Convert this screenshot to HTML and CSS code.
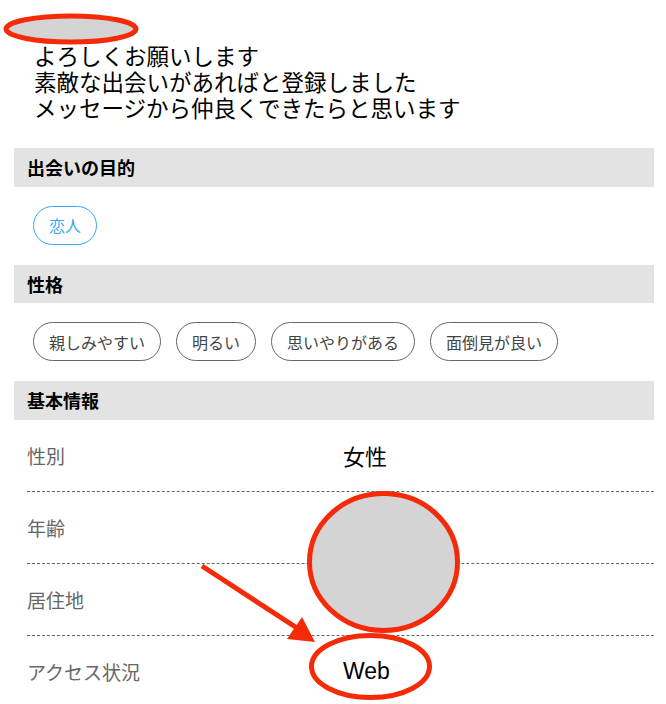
FILE: index.html
```html
<!DOCTYPE html>
<html lang="ja">
<head>
    <meta charset="UTF-8">
    <meta name="viewport" content="width=device-width, initial-scale=1.0">
    <title>プロフィール</title>
    <link rel="stylesheet" href="styles.css">
</head>
<body>
    <div class="profile">
        <!-- 自己紹介 -->
        <p class="intro">
            よろしくお願いします<br>
            素敵な出会いがあればと登録しました<br>
            メッセージから仲良くできたらと思います
        </p>

        <h2 class="section-title">出会いの目的</h2>
        <div class="tags">
            <span class="tag tag-purpose">恋人</span>
        </div>

        <h2 class="section-title">性格</h2>
        <div class="tags">
            <span class="tag">親しみやすい</span>
            <span class="tag">明るい</span>
            <span class="tag">思いやりがある</span>
            <span class="tag">面倒見が良い</span>
        </div>

        <h2 class="section-title">基本情報</h2>
        <dl class="info">
            <div class="info-row">
                <dt>性別</dt>
                <dd>女性</dd>
            </div>
            <div class="info-row">
                <dt>年齢</dt>
                <dd></dd>
            </div>
            <div class="info-row">
                <dt>居住地</dt>
                <dd></dd>
            </div>
            <div class="info-row">
                <dt>アクセス状況</dt>
                <dd class="latin">Web</dd>
            </div>
        </dl>
    </div>

    <!-- 赤丸・矢印の書き込み -->
    <svg class="marks" width="666" height="704" viewBox="0 0 666 704">
        <ellipse cx="71" cy="29" rx="65" ry="13" fill="#d4d4d4" stroke="#f42a08" stroke-width="5"/>
        <ellipse cx="383.5" cy="562" rx="74" ry="68.5" fill="#d4d4d4" stroke="#f42a08" stroke-width="5"/>
        <ellipse cx="370.5" cy="666.5" rx="59" ry="31" fill="none" stroke="#f42a08" stroke-width="5"/>
        <line x1="202" y1="566" x2="300" y2="630" stroke="#f42a08" stroke-width="5"/>
        <polygon points="315,642 302,617 287,639" fill="#f42a08"/>
    </svg>
</body>
</html>
```

FILE: styles.css
```css
html {
    overflow: hidden; /* スクロールバーを出さない */
}
body {
    margin: 0;
    background-color: #FFFFFF;
    color: #000000;
    font-family: "Noto Sans CJK JP", "Noto Sans", sans-serif;
    position: relative;
}
.profile {
    padding: 0 12px 0 14px;
}
.intro {
    margin: 42px 0 28px;
    padding-left: 20px;
    font-size: 22.5px;
    line-height: 26px;
}
.section-title {
    margin: 0;
    height: 38.5px;
    padding-left: 13px;
    display: flex;
    align-items: center;
    background-color: #e3e3e3;
    font-size: 18px;
    font-weight: bold;
}
.tags {
    display: flex;
    flex-wrap: wrap;
    gap: 15px;
    padding: 19px 19px 20px;
}
.tag {
    height: 39px;
    padding: 0 15px;
    box-sizing: border-box;
    display: inline-flex;
    align-items: center;
    border: 1px solid #666666;
    border-radius: 20px;
    font-size: 16px;
    color: #444444;
}
.tag-purpose {
    border-color: #35a8f2; /* 目的タグは青 */
    color: #35a8f2;
}
.info {
    margin: 0;
}
.info-row {
    display: flex;
    align-items: center;
    height: 72px;
    box-sizing: border-box;
    margin-left: 13px;
    border-bottom: 1px dashed #666666;
}
.info-row:last-child {
    border-bottom: none;
}
.info-row dt {
    width: 316px;
    font-size: 19px;
    color: #666666;
}
.info-row dd {
    margin: 0;
    font-size: 22px;
}
.info-row dd.latin {
    font-family: "Liberation Sans", "Noto Sans CJK JP", sans-serif;
    font-size: 23px;
}
.marks {
    position: absolute;
    top: 0;
    left: 0;
    pointer-events: none;
}
```
